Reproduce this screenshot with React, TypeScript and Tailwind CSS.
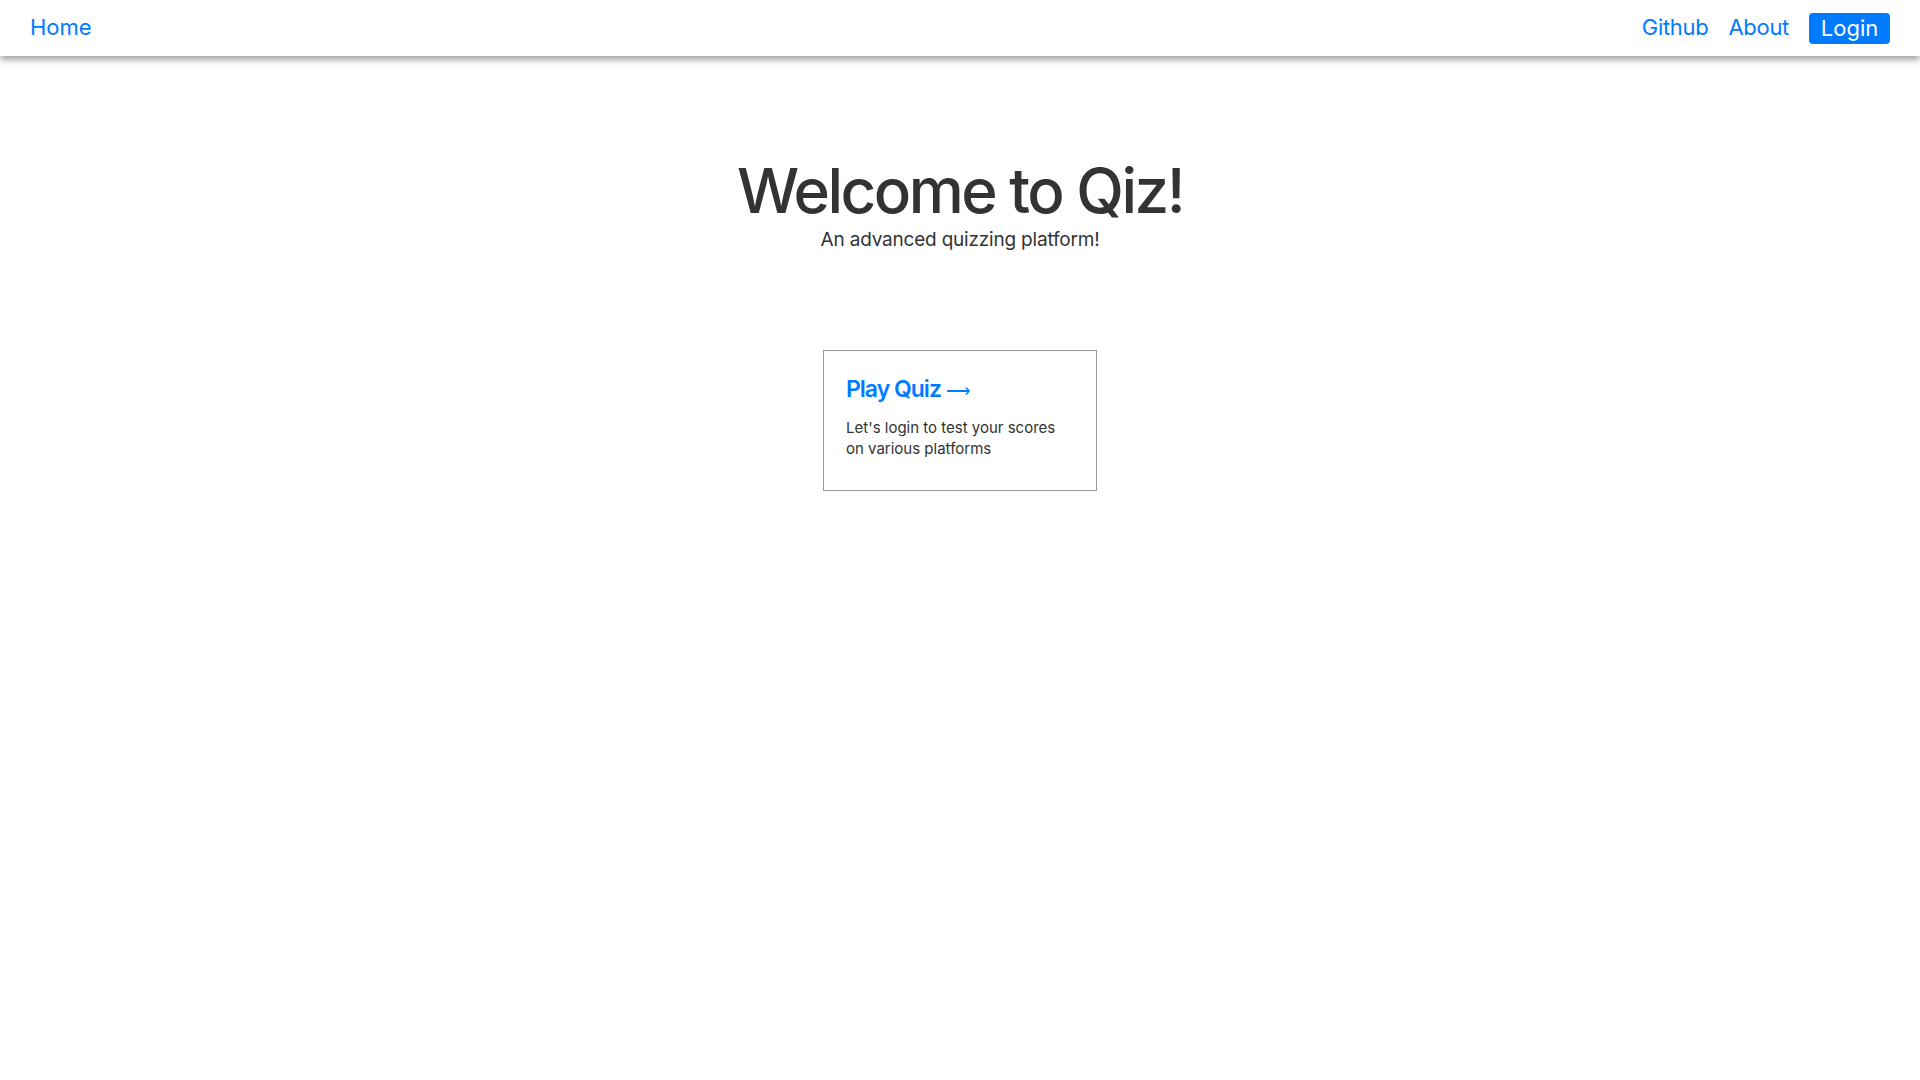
const App = () => {
  return (
    <div className="min-h-screen bg-white font-['Inter',sans-serif] text-[#333]">
      <nav className="flex h-14 items-center justify-between bg-white px-[30px] shadow-[0_4px_6px_rgba(0,0,0,0.35)]">
        <a href="#" className="-mt-0.5 text-[22px] text-[#007bff]">
          Home
        </a>
        <div className="flex items-center gap-5">
          <a href="#" className="-mt-0.5 text-[22px] tracking-[-0.3px] text-[#007bff]">
            Github
          </a>
          <a href="#" className="-mt-0.5 text-[22px] tracking-[-0.3px] text-[#007bff]">
            About
          </a>
          <button className="h-[31px] w-[81px] rounded bg-[#007bff] text-[22px] leading-none text-white">
            Login
          </button>
        </div>
      </nav>
      <div className="flex flex-col items-center pt-[98px]">
        <h1 className="text-[62px] font-medium leading-[1.2] tracking-[-2.5px]">
          Welcome to Qiz!
        </h1>
        <p className="text-[19px] leading-[24px] tracking-[-0.2px]">An advanced quizzing platform!</p>
        <div className="mt-[98px] w-[274px] border border-[#999] px-[22px] pb-[31px] pt-[21px]">
          <h2 className="text-[23px] font-semibold tracking-[-1px] text-[#007bff]">
            Play Quiz <span className="font-['DejaVu_Sans',sans-serif] text-[17px] font-light">⟶</span>
          </h2>
          <p className="mt-[10px] text-[15px] leading-[21px]">
            Let's login to test your scores on various platforms
          </p>
        </div>
      </div>
    </div>
  );
};

export default App;
